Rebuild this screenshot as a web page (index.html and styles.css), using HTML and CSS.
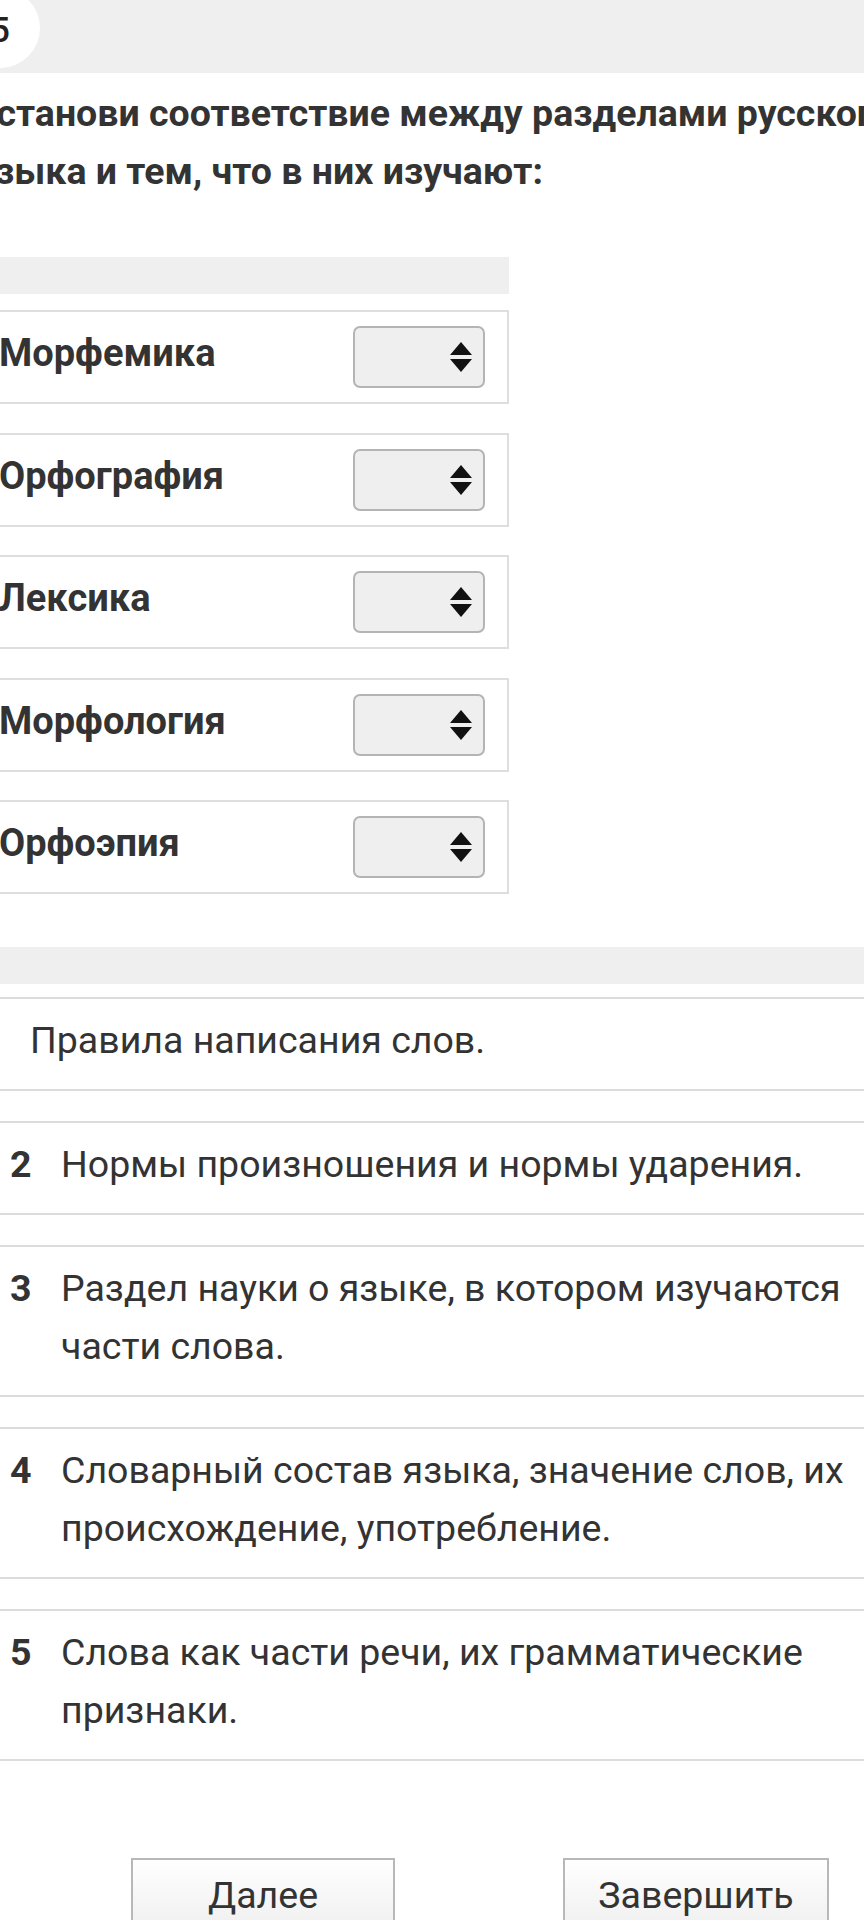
FILE: index.html
```html
<!DOCTYPE html>
<html lang="ru">
<head>
<meta charset="utf-8">
<title>Задание 5</title>
<link rel="stylesheet" href="styles.css">
</head>
<body>
<div class="page">
  <div class="topbar"><div class="badge">5</div></div>
  <p class="question">Установи соответствие между разделами русского языка и тем, что в них изучают:</p>

  <div class="left-col">
    <div class="col-head"></div>
    <div class="rows">
      <div class="row"><span class="label">Морфемика</span><div class="select"><svg class="arrows" viewBox="0 0 22 30" width="22" height="30"><path d="M11 0 L22 13 L0 13 Z"/><path d="M0 17 L22 17 L11 30 Z"/></svg></div></div>
      <div class="row"><span class="label">Орфография</span><div class="select"><svg class="arrows" viewBox="0 0 22 30" width="22" height="30"><path d="M11 0 L22 13 L0 13 Z"/><path d="M0 17 L22 17 L11 30 Z"/></svg></div></div>
      <div class="row"><span class="label">Лексика</span><div class="select"><svg class="arrows" viewBox="0 0 22 30" width="22" height="30"><path d="M11 0 L22 13 L0 13 Z"/><path d="M0 17 L22 17 L11 30 Z"/></svg></div></div>
      <div class="row"><span class="label">Морфология</span><div class="select"><svg class="arrows" viewBox="0 0 22 30" width="22" height="30"><path d="M11 0 L22 13 L0 13 Z"/><path d="M0 17 L22 17 L11 30 Z"/></svg></div></div>
      <div class="row"><span class="label">Орфоэпия</span><div class="select"><svg class="arrows" viewBox="0 0 22 30" width="22" height="30"><path d="M11 0 L22 13 L0 13 Z"/><path d="M0 17 L22 17 L11 30 Z"/></svg></div></div>
    </div>
  </div>

  <div class="right-col">
    <div class="col-head wide"></div>
    <div class="items">
      <div class="item nonum"><span class="text">Правила написания слов.</span></div>
      <div class="item"><span class="num">2</span><span class="text">Нормы произношения и нормы ударения.</span></div>
      <div class="item"><span class="num">3</span><span class="text">Раздел науки о языке, в котором изучаются части слова.</span></div>
      <div class="item"><span class="num">4</span><span class="text">Словарный состав языка, значение слов, их происхождение, употребление.</span></div>
      <div class="item"><span class="num">5</span><span class="text">Слова как части речи, их грамматические признаки.</span></div>
    </div>
  </div>

  <div class="buttons">
    <button class="btn btn-next">Далее</button>
    <button class="btn btn-finish">Завершить</button>
  </div>
</div>
</body>
</html>
```

FILE: styles.css
```css
html, body {
  margin: 0;
  padding: 0;
  background: #ffffff;
}
body {
  width: 864px;
  height: 1920px;
  overflow: hidden;
  font-family: Roboto, "Noto Sans", "Liberation Sans", sans-serif;
  color: #333333;
}
* { box-sizing: border-box; }

.page {
  margin-left: -22px;
  width: 950px;
}

.topbar {
  height: 73px;
  background: #efefef;
  display: flex;
  align-items: flex-start;
}
.badge {
  flex: 0 0 80px;
  width: 80px;
  height: 80px;
  margin-left: -18px;
  margin-top: -12px;
  border-radius: 50%;
  background: #ffffff;
  display: flex;
  align-items: center;
  justify-content: center;
  padding-top: 4px;
  font-size: 35px;
  font-weight: 500;
  color: #222222;
}

.question {
  width: 934px;
  margin: 11px 0 0 -4px;
  font-size: 37.5px;
  line-height: 58px;
  font-weight: 700;
  color: #333333;
}

.col-head {
  height: 37px;
  background: #efefef;
}

.left-col {
  width: 531px;
  margin-top: 57px;
}
.rows {
  margin-top: 16px;
  display: flex;
  flex-direction: column;
  gap: 28.5px;
}
.row {
  height: 94px;
  border: 2px solid #dedede;
  padding: 0 22px 0 19px;
  display: flex;
  align-items: center;
  justify-content: space-between;
}
.label {
  margin-bottom: 8px;
  font-size: 38px;
  font-weight: 700;
  color: #333333;
}
.select {
  width: 132px;
  height: 62px;
  border: 2px solid #b4b4b4;
  border-radius: 7px;
  background: #efefef;
  display: flex;
  align-items: center;
  justify-content: flex-end;
  padding-right: 11px;
}
.arrows path { fill: #111111; }

.right-col {
  margin-top: 53px;
}
.col-head.wide {
  width: 100%;
}
.items {
  margin-top: 13px;
  display: flex;
  flex-direction: column;
  gap: 30px;
}
.item {
  border-top: 2px solid #dcdcdc;
  border-bottom: 2px solid #dcdcdc;
  padding: 12px 60px 20px 32px;
  display: flex;
  align-items: flex-start;
  font-size: 37.5px;
  line-height: 58px;
}
.item.nonum {
  padding-left: 52px;
}
.num {
  flex: 0 0 51px;
  font-weight: 700;
  color: #333333;
}
.text {
  flex: 1 1 auto;
  color: #333333;
}

.buttons {
  margin-top: 97px;
  padding-left: 153px;
  display: flex;
  gap: 168px;
}
.btn {
  height: 100px;
  border: 2px solid #b8b8b8;
  background: linear-gradient(#ffffff, #e9e9e9);
  font-family: Roboto, "Noto Sans", "Liberation Sans", sans-serif;
  font-size: 37.5px;
  color: #333333;
  padding: 13px 0 0 0;
  display: flex;
  justify-content: center;
  align-items: flex-start;
  line-height: normal;
}
.btn-next { width: 264px; }
.btn-finish { width: 266px; }
```
